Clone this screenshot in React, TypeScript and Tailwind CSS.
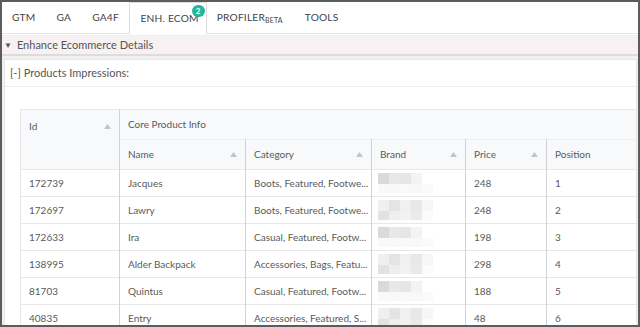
import React from 'react';

const tabs = ['GTM', 'GA', 'GA4F'];

const rows = [
    { id: '172739', name: 'Jacques', category: 'Boots, Featured, Footwe...', price: '248', pos: '1', blur: 0 },
    { id: '172697', name: 'Lawry', category: 'Boots, Featured, Footwe...', price: '248', pos: '2', blur: 1 },
    { id: '172633', name: 'Ira', category: 'Casual, Featured, Footw...', price: '198', pos: '3', blur: 0 },
    { id: '138995', name: 'Alder Backpack', category: 'Accessories, Bags, Featu...', price: '298', pos: '4', blur: 1 },
    { id: '81703', name: 'Quintus', category: 'Casual, Featured, Footw...', price: '188', pos: '5', blur: 0 },
    { id: '40835', name: 'Entry', category: 'Accessories, Featured, S...', price: '48', pos: '6', blur: 1 },
];

// mosaic blocks hiding the brand name
const mosaics = [
    [
        ['bg-[#dadada]', 'bg-[#e8e8e8]', 'bg-[#e6e6e6]', 'bg-[#f3f3f3]', 'bg-white'],
        ['bg-[#f9f9f9]', 'bg-[#f8f8f8]', 'bg-[#f9f9f9]', 'bg-[#f8f8f8]', 'bg-[#fafafa]'],
    ],
    [
        ['bg-[#efefef]', 'bg-[#e4e4e4]', 'bg-[#f0f0f0]', 'bg-[#e8e8e8]', 'bg-[#f6f6f6]'],
        ['bg-[#e2e2e2]', 'bg-[#eeeeee]', 'bg-[#f2f2f2]', 'bg-[#eaeaea]', 'bg-[#fbfbfb]'],
    ],
];

const SortArrow: React.FC = () => (
    <svg width="7" height="5" viewBox="0 0 7 5" className="shrink-0">
        <path d="M3.5 0 L7 5 L0 5 Z" fill="#c4c4c4" />
    </svg>
);

const HeadCell: React.FC<{ label: string; sort?: boolean }> = ({ label, sort = true }) => (
    <div className="flex items-center justify-between pl-2 pr-2">
        <span>{label}</span>
        {sort && <SortArrow />}
    </div>
);

export default function App() {
    return (
        <div className="w-[640px] h-[327px] overflow-hidden bg-white border-2 border-[#5c5c5c] font-['Lato','Open_Sans',sans-serif] text-[#5a5a5a]">
            {/* Tabs */}
            <div className="flex items-end h-[32px] border-b border-[#e4e4e4] text-[10.2px] tracking-[0.2px] text-[#444]">
                {tabs.map(t => (
                    <div key={t} className="px-[10.5px] h-[31px] flex items-center first:pl-[10px]">{t}</div>
                ))}
                <div className="relative flex items-center pl-[10px] pr-[7px] bg-white border border-b-0 border-[#dedede] mb-[-1px] h-[32px]">
                    ENH. ECOM
                    <span className="absolute top-[2px] right-[1px] w-[13px] h-[12px] rounded-full bg-[#22b69b] text-white text-[8px] font-bold flex items-center justify-center leading-none">2</span>
                </div>
                <div className="pl-[10px] pr-[12px] h-[31px] flex items-center">
                    PROFILER<sub className="text-[7px] relative top-[2px]">BETA</sub>
                </div>
                <div className="px-[10px] h-[31px] flex items-center">TOOLS</div>
            </div>

            {/* Section header */}
            <div className="mt-[1px] h-[19px] bg-[#f7f1f1] border-t border-[#eeeeee] flex items-center pl-[2px] text-[11px] text-[#555]">
                <span className="text-[8px] mr-[5px]">▼</span>
                Enhance Ecommerce Details
            </div>

            {/* Content */}
            <div className="bg-[#f1f1f1] border-t-2 border-[#dcdcdc] pt-[3px] pl-[2px] pr-[1px] h-full">
                <div className="bg-white border border-[#e6e6e6] h-full overflow-hidden">
                    <div className="h-[27px] flex items-center pl-[5px] border-b border-[#ececec] text-[11px] text-[#555]">
                        [-] Products Impressions:
                    </div>
                    <div className="pt-[22px] pl-[15px]">
                        <table className="table-fixed border-collapse text-[10px] text-[#5a5a5a] w-[640px]">
                            <colgroup>
                                <col className="w-[99px]" />
                                <col className="w-[126px]" />
                                <col className="w-[126px]" />
                                <col className="w-[94px]" />
                                <col className="w-[81px]" />
                                <col className="w-[114px]" />
                            </colgroup>
                            <thead className="bg-[#f8f9fb]">
                                <tr className="h-[30px]">
                                    <th rowSpan={2} className="align-top font-normal text-left border-t border-l border-[#e8e8e8] border-r border-r-[#d2d2d2] pt-[9px]">
                                        <HeadCell label="Id" />
                                    </th>
                                    <th colSpan={5} className="font-normal text-left border-t border-[#e8e8e8] px-2">Core Product Info</th>
                                </tr>
                                <tr className="h-[30px]">
                                    {['Name', 'Category', 'Brand', 'Price', 'Position'].map((h, i) => (
                                        <th key={h} className={`font-normal text-left border-t border-[#eeeeee] ${i < 4 ? 'border-r border-r-[#d2d2d2]' : ''}`}>
                                            <HeadCell label={h} />
                                        </th>
                                    ))}
                                </tr>
                            </thead>
                            <tbody>
                                {rows.map(r => (
                                    <tr key={r.id} className="h-[27px] border-t border-[#e8e8e8]">
                                        <td className="pl-2 border-l border-[#e8e8e8] border-r border-r-[#d2d2d2]">{r.id}</td>
                                        <td className="pl-2 border-r border-[#d2d2d2]">{r.name}</td>
                                        <td className="pl-2 border-r border-[#d2d2d2] whitespace-nowrap overflow-hidden">{r.category}</td>
                                        <td className="pl-[6px] border-r border-[#d2d2d2]">
                                            <div className="flex flex-col">
                                                {mosaics[r.blur].map((line, li) => (
                                                    <div key={li} className="flex">
                                                        {line.map((c, ci) => (
                                                            <div key={ci} className={`w-[11px] ${li === 0 ? 'h-[11px]' : 'h-[9px]'} ${c}`} />
                                                        ))}
                                                    </div>
                                                ))}
                                            </div>
                                        </td>
                                        <td className="pl-2 border-r border-[#d2d2d2]">{r.price}</td>
                                        <td className="pl-2">{r.pos}</td>
                                    </tr>
                                ))}
                            </tbody>
                        </table>
                    </div>
                </div>
            </div>
        </div>
    );
}
